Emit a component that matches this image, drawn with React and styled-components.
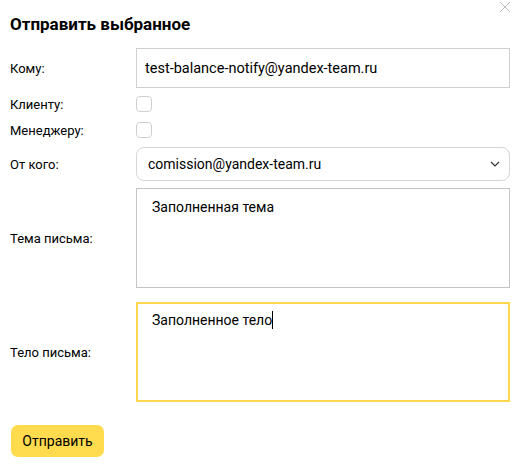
import React from "react";
import styled, { createGlobalStyle } from "styled-components";

const GlobalStyle = createGlobalStyle`
  body {
    margin: 0;
    background: #fff;
    font-family: Roboto, "Noto Sans", Arial, sans-serif;
    color: #000;
  }
`;

const Modal = styled.div`
  position: relative;
  width: 521px;
  height: 467px;
  box-sizing: border-box;
  padding: 12px 11px 0 10px;
`;

const Close = styled.button`
  position: absolute;
  top: 1px;
  right: 10px;
  width: 12px;
  height: 12px;
  padding: 0;
  border: none;
  background: none;
  cursor: pointer;
`;

const Title = styled.h2`
  margin: 0;
  font-size: 17px;
  font-weight: 700;
  line-height: 24px;
`;

const Row = styled.div`
  display: grid;
  grid-template-columns: 126px 1fr;
  align-items: center;
  margin-top: ${(p) => p.$gap || 0}px;
  height: ${(p) => p.$h}px;
`;

const Label = styled.label`
  font-size: 13px;
  color: #000;
`;

const TextInput = styled.input`
  box-sizing: border-box;
  width: 100%;
  height: 40px;
  border: 1px solid #d0d0d0;
  padding: 0 8px;
  font-family: inherit;
  font-size: 14.5px;
  color: #000;
  outline: none;
`;

const Check = styled.span`
  display: block;
  box-sizing: border-box;
  width: 16px;
  height: 16px;
  border: 1px solid #cfcfcf;
  border-radius: 4px;
`;

const Select = styled.div`
  box-sizing: border-box;
  height: 34px;
  display: flex;
  align-items: center;
  justify-content: space-between;
  padding: 0 9px 0 11px;
  border: 1px solid #d6d6d6;
  border-radius: 8px;
  font-size: 14px;
`;

const Area = styled.div`
  box-sizing: border-box;
  height: 100%;
  border: ${(p) => (p.$focus ? "2px solid #ffd84f" : "1px solid #c4c4c4")};
  padding: ${(p) => (p.$focus ? "6px 14px" : "8px 15px")};
  font-size: 14px;
  line-height: 20px;
`;

const Caret = styled.span`
  display: inline-block;
  width: 1px;
  height: 18px;
  background: #000;
  vertical-align: -4px;
`;

const Button = styled.button`
  margin-top: 23px;
  margin-left: 1px;
  height: 32px;
  width: 93px;
  padding: 0;
  border: none;
  border-radius: 7px;
  background: #ffdb4d;
  font-family: inherit;
  font-size: 14px;
  color: #000;
`;

export default function App() {
  return (
    <>
      <GlobalStyle />
      <Modal>
        <Close aria-label="close">
          <svg width="12" height="12" viewBox="0 0 12 12">
            <path d="M1 1L11 11M11 1L1 11" stroke="#bdbdbd" strokeWidth="1" fill="none" />
          </svg>
        </Close>
        <Title>Отправить выбранное</Title>
        <Row $gap={12} $h={40}>
          <Label>Кому:</Label>
          <TextInput defaultValue="test-balance-notify@yandex-team.ru" />
        </Row>
        <Row $gap={3} $h={26}>
          <Label>Клиенту:</Label>
          <Check />
        </Row>
        <Row $h={26}>
          <Label>Менеджеру:</Label>
          <Check />
        </Row>
        <Row $gap={4} $h={34}>
          <Label>От кого:</Label>
          <Select>
            <span>comission@yandex-team.ru</span>
            <svg width="10" height="6" viewBox="0 0 10 6">
              <path d="M1 1L5 5L9 1" stroke="#333" strokeWidth="1.2" fill="none" />
            </svg>
          </Select>
        </Row>
        <Row $gap={7} $h={100}>
          <Label>Тема письма:</Label>
          <Area>Заполненная тема</Area>
        </Row>
        <Row $gap={14} $h={100}>
          <Label>Тело письма:</Label>
          <Area $focus>
            Заполненное тело
            <Caret />
          </Area>
        </Row>
        <Button>Отправить</Button>
      </Modal>
    </>
  );
}
